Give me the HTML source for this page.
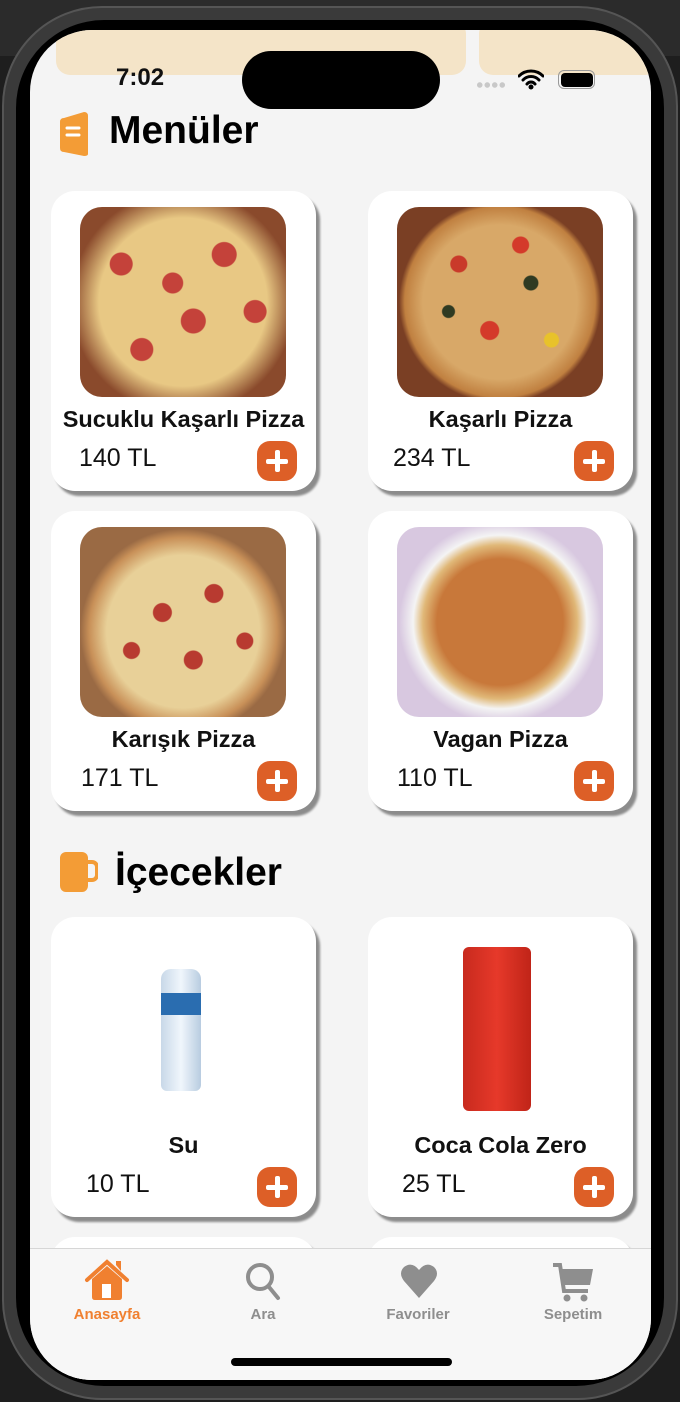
<!DOCTYPE html>
<html><head><meta charset="utf-8"><style>
*{margin:0;padding:0;box-sizing:border-box}
html,body{width:680px;height:1402px;overflow:hidden}
body{background:#1e1e1e;position:relative;font-family:"Liberation Sans",sans-serif}
.topbar{position:absolute;left:0;top:0;width:680px;height:56px;background:#2b2b2b}
.phone{position:absolute;left:2px;top:6px;width:676px;height:1394px;border-radius:100px;background:#3a3a3a;border:2px solid #555}
.bezel{position:absolute;left:12px;top:12px;right:12px;bottom:12px;border-radius:88px;background:#000}
.screen{position:absolute;left:30px;top:30px;width:621px;height:1350px;border-radius:62px;background:#f4f4f4;overflow:hidden}
.abs{position:absolute}
.card{position:absolute;width:265px;height:300px;background:#fff;border-radius:24px;box-shadow:4px 5px 2px #8c8c8c}
.img{position:absolute;left:29px;top:16px;width:206px;height:190px;border-radius:22px;overflow:hidden}
.name{position:absolute;left:0;width:265px;top:215px;text-align:center;font-weight:bold;font-size:23.5px;color:#111;white-space:nowrap}
.price{position:absolute;top:253px;font-size:25px;color:#111}
.plus{position:absolute;left:206px;top:250px;width:40px;height:40px;border-radius:13px;background:#dd5f27}
.plus:before{content:"";position:absolute;left:9px;top:17.5px;width:22px;height:5px;background:#fff;border-radius:2px}
.plus:after{content:"";position:absolute;left:17.5px;top:9px;width:5px;height:22px;background:#fff;border-radius:2px}
h2{position:absolute;font-size:39px;font-weight:bold;color:#000}
.tab{position:absolute;top:1218px;left:0;width:621px;height:132px;background:#f7f7f7;border-top:1px solid #d6d6d6}
.tl{position:absolute;top:57px;font-size:15px;font-weight:bold;color:#8e8e8e;text-align:center;width:100px}
</style></head><body>
<div class="topbar"></div>
<div class="phone"><div class="bezel"></div></div>
<div class="screen">
  <div class="abs" style="left:26px;top:-10px;width:410px;height:55px;background:#f4e4c8;border-radius:14px"></div>
  <div class="abs" style="left:449px;top:-10px;width:180px;height:55px;background:#f4e4c8;border-radius:14px"></div>
  <div class="abs" style="left:86px;top:34px;font-size:24px;font-weight:bold;color:#111">7:02</div>
  <div class="abs" style="left:212px;top:21px;width:198px;height:58px;border-radius:29px;background:#000"></div>
  <div class="abs" style="left:446px;top:52px;width:30px;height:6px;background:radial-gradient(circle,#c8c8c8 2.5px,transparent 3px) 0 0/7.5px 6px"></div>
  <svg class="abs" style="left:488px;top:38px" width="26" height="22" viewBox="0 0 26 22"><path d="M1 8a17 17 0 0 1 24 0M5 12a11 11 0 0 1 16 0M9 16a5 5 0 0 1 8 0" stroke="#000" stroke-width="3" fill="none" stroke-linecap="round"/><circle cx="13" cy="19" r="2.5"/></svg>
  <div class="abs" style="left:528px;top:40px;width:37px;height:19px;border:1.5px solid #999;border-radius:6px;padding:1.5px"><div style="width:100%;height:100%;background:#000;border-radius:4px"></div></div>

  <svg class="abs" style="left:30px;top:82px" width="32" height="44" viewBox="0 0 32 44"><path d="M4 6 L24 0 Q28 0 28 4 L28 42 Q28 44 24 44 L4 40 Q0 40 0 36 L0 10 Q0 6 4 6Z" fill="#f39c36"/><path d="M7 16 H19 M7 23 H19" stroke="#fff" stroke-width="3" stroke-linecap="round"/></svg>
  <h2 style="left:79px;top:79px">Menüler</h2>

  <div class="card" style="left:21px;top:161px"><div class="img" style="background:radial-gradient(circle at 20% 30%,#c4423a 11px,transparent 12px),radial-gradient(circle at 70% 25%,#c4423a 12px,transparent 13px),radial-gradient(circle at 55% 60%,#c4423a 12px,transparent 13px),radial-gradient(circle at 30% 75%,#c4423a 11px,transparent 12px),radial-gradient(circle at 85% 55%,#c4423a 11px,transparent 12px),radial-gradient(circle at 45% 40%,#c4423a 10px,transparent 11px),radial-gradient(circle at 50% 50%,#e8c884 60%,#8a4a2c 80%)"></div><div class="name">Sucuklu Kaşarlı Pizza</div><div class="price" style="left:28px">140 TL</div><div class="plus"></div></div>
  <div class="card" style="left:338px;top:161px"><div class="img" style="background:radial-gradient(circle at 30% 30%,#c93a2a 8px,transparent 9px),radial-gradient(circle at 65% 40%,#2f3a22 7px,transparent 8px),radial-gradient(circle at 45% 65%,#d43a2a 9px,transparent 10px),radial-gradient(circle at 75% 70%,#e8c22a 7px,transparent 8px),radial-gradient(circle at 25% 55%,#2f3a22 6px,transparent 7px),radial-gradient(circle at 60% 20%,#d43a2a 8px,transparent 9px),radial-gradient(circle at 50% 50%,#d8a868 55%,#c08040 68%,#7a3f24 72%)"></div><div class="name">Kaşarlı Pizza</div><div class="price" style="left:25px">234 TL</div><div class="plus"></div></div>
  <div class="card" style="left:21px;top:481px"><div class="img" style="background:radial-gradient(circle at 40% 45%,#b83a30 9px,transparent 10px),radial-gradient(circle at 65% 35%,#b83a30 9px,transparent 10px),radial-gradient(circle at 55% 70%,#b83a30 9px,transparent 10px),radial-gradient(circle at 25% 65%,#b83a30 8px,transparent 9px),radial-gradient(circle at 80% 60%,#b83a30 8px,transparent 9px),radial-gradient(circle at 50% 55%,#e8d098 52%,#c89058 64%,#9a6a44 70%)"></div><div class="name">Karışık Pizza</div><div class="price" style="left:30px">171 TL</div><div class="plus"></div></div>
  <div class="card" style="left:338px;top:481px"><div class="img" style="background:radial-gradient(circle at 50% 50%,#c8783a 45%,#e0b878 55%,#f4f4f4 62%,#d8c8e0 72%)"></div><div class="name">Vagan Pizza</div><div class="price" style="left:29px">110 TL</div><div class="plus"></div></div>

  <svg class="abs" style="left:30px;top:822px" width="38" height="40" viewBox="0 0 38 40"><rect x="0" y="0" width="28" height="40" rx="6" fill="#f39c36"/><path d="M28 10 h4 a5 5 0 0 1 5 5 v8 a5 5 0 0 1 -5 5 h-4" stroke="#f39c36" stroke-width="4" fill="none"/></svg>
  <h2 style="left:85px;top:821px">İçecekler</h2>

  <div class="card" style="left:21px;top:887px"><div class="abs" style="left:110px;top:52px;width:40px;height:122px;border-radius:10px 10px 6px 6px;background:linear-gradient(90deg,#c8d8e8,#f0f6fc,#b8cce0)"><div style="margin-top:24px;height:22px;background:#2a6db0"></div></div><div class="name">Su</div><div class="price" style="left:35px">10 TL</div><div class="plus"></div></div>
  <div class="card" style="left:338px;top:887px"><div class="abs" style="left:95px;top:30px;width:68px;height:164px;border-radius:6px;background:linear-gradient(90deg,#c82a1e,#e6392a,#c02418)"></div><div class="name">Coca Cola Zero</div><div class="price" style="left:34px">25 TL</div><div class="plus"></div></div>
  <div class="card" style="left:21px;top:1207px"></div>
  <div class="card" style="left:338px;top:1207px"></div>

  <div class="tab">
    <svg class="abs" style="left:54px;top:10px" width="46" height="42" viewBox="0 0 46 42"><path d="M3 21 L23 3 L43 21" stroke="#f08030" stroke-width="4" fill="none" stroke-linecap="round"/><path d="M32 6 v-4 h5 v10" fill="#f08030"/><path d="M8 20 L23 7 L38 20 V38 Q38 41 35 41 H11 Q8 41 8 38Z" fill="#f08030"/><rect x="18" y="25" width="9" height="14" fill="#fff"/></svg>
    <svg class="abs" style="left:214px;top:12px" width="40" height="42" viewBox="0 0 40 42"><circle cx="16" cy="16" r="12" stroke="#8e8e8e" stroke-width="4" fill="none"/><path d="M25 26 L34 37" stroke="#8e8e8e" stroke-width="4" stroke-linecap="round"/></svg>
    <svg class="abs" style="left:370px;top:14px" width="38" height="36" viewBox="0 0 38 36"><path d="M19 35 L4 18 Q-2 10 4 4 Q12 -2 19 7 Q26 -2 34 4 Q40 10 34 18Z" fill="#8e8e8e"/></svg>
    <svg class="abs" style="left:522px;top:14px" width="42" height="40" viewBox="0 0 42 40"><path d="M1 2 H8 L12 28 H36" stroke="#8e8e8e" stroke-width="4" fill="none"/><path d="M10 6 H41 L38 22 H12Z" fill="#8e8e8e"/><circle cx="15" cy="35" r="3.5" fill="#8e8e8e"/><circle cx="32" cy="35" r="3.5" fill="#8e8e8e"/></svg>
    <div class="tl" style="left:27px;color:#f08030">Anasayfa</div>
    <div class="tl" style="left:183px">Ara</div>
    <div class="tl" style="left:338px">Favoriler</div>
    <div class="tl" style="left:493px">Sepetim</div>
    <div class="abs" style="left:201px;top:109px;width:221px;height:8px;border-radius:4px;background:#000"></div>
  </div>
</div>
</body></html>
